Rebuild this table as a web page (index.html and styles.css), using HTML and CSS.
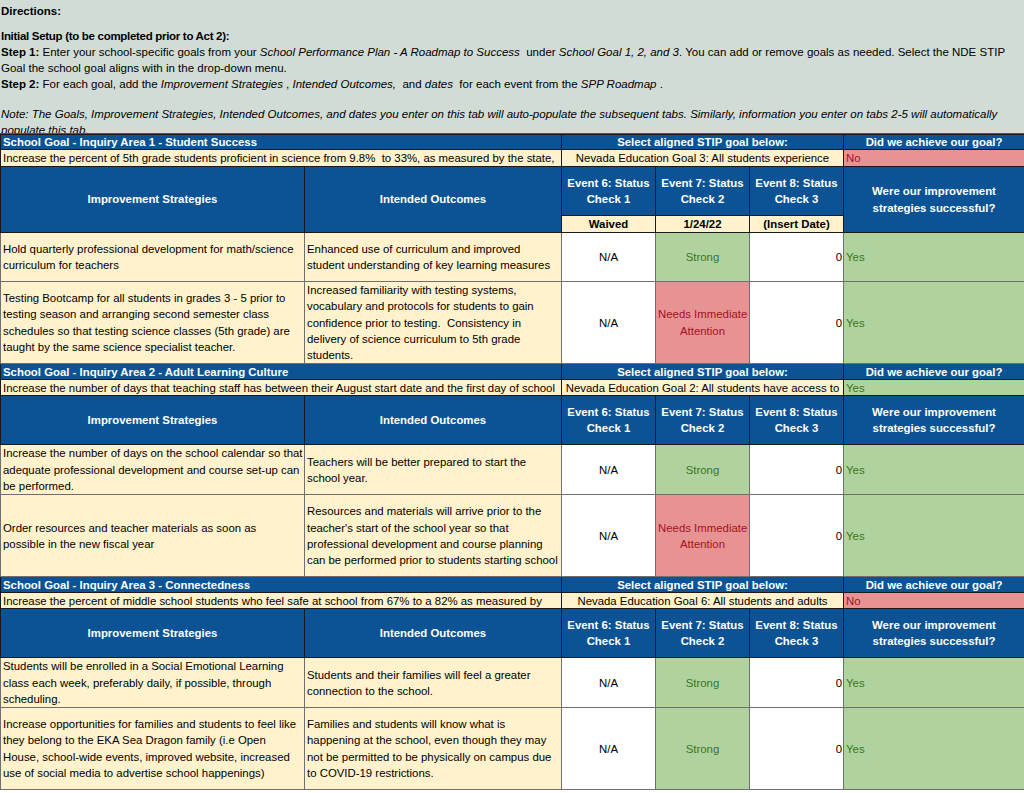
FILE: index.html
```html
<!DOCTYPE html>
<html lang="en">
<head>
<meta charset="utf-8">
<title>STIP Goals</title>
<link rel="stylesheet" href="styles.css">
</head>
<body>
<div class="directions">
  <div class="line"><b>Directions:</b></div>
  <div class="line gap1"><b class="tight">Initial Setup (to be completed prior to Act 2):</b></div>
  <div class="line"><b>Step 1:</b> Enter your school-specific goals from your <i>School Performance Plan - A Roadmap to Success</i>&nbsp; under <i>School Goal 1, 2, and 3</i>. You can add or remove goals as needed. Select the NDE STIP</div>
  <div class="line">Goal the school goal aligns with in the drop-down menu.</div>
  <div class="line"><b>Step 2:</b> For each goal, add the <i>Improvement Strategies</i> , <i>Intended Outcomes,</i>&nbsp; and <i>dates</i>&nbsp; for each event from the <i>SPP Roadmap</i> .</div>
  <div class="line gap2"><i>Note: The Goals, Improvement Strategies, Intended Outcomes, and dates you enter on this tab will auto-populate the subsequent tabs. Similarly, information you enter on tabs 2-5 will automatically</i></div>
  <div class="line"><i>populate this tab.</i></div>
</div>
<table class="sheet">
  <colgroup>
    <col class="c1"><col class="c2"><col class="c3"><col class="c4"><col class="c5"><col class="c6">
  </colgroup>
  <tbody>
    <tr class="gtitle h15">
      <td colspan="2" class="left">School Goal - Inquiry Area 1 - Student Success</td>
      <td colspan="3">Select aligned STIP goal below:</td>
      <td>Did we achieve our goal?</td>
    </tr>
    <tr class="gtext h17">
      <td colspan="2">Increase the percent of 5th grade students proficient in science from 9.8%&nbsp; to 33%, as measured by the state,</td>
      <td colspan="3" class="center">Nevada Education Goal 3: All students experience</td>
      <td class="ans-no">No</td>
    </tr>
    <tr class="head h49">
      <th rowspan="2">Improvement Strategies</th>
      <th rowspan="2">Intended Outcomes</th>
      <th>Event 6: Status<br>Check 1</th>
      <th>Event 7: Status<br>Check 2</th>
      <th>Event 8: Status<br>Check 3</th>
      <th rowspan="2">Were our improvement<br>strategies successful?</th>
    </tr>
    <tr class="dates h17">
      <td>Waived</td><td>1/24/22</td><td>(Insert Date)</td>
    </tr>
    <tr class="data h49">
      <td class="txt">Hold quarterly professional development for math/science<br>curriculum for teachers</td>
      <td class="txt">Enhanced use of curriculum and improved<br>student understanding of key learning measures</td>
      <td class="na">N/A</td>
      <td class="strong">Strong</td>
      <td class="num">0</td>
      <td class="yes">Yes</td>
    </tr>
    <tr class="data h82">
      <td class="txt">Testing Bootcamp for all students in grades 3 - 5 prior to<br>testing season and arranging second semester class<br>schedules so that testing science classes (5th grade) are<br>taught by the same science specialist teacher.</td>
      <td class="txt">Increased familiarity with testing systems,<br>vocabulary and protocols for students to gain<br>confidence prior to testing.&nbsp; Consistency in<br>delivery of science curriculum to 5th grade<br>students.</td>
      <td class="na">N/A</td>
      <td class="needs">Needs Immediate<br>Attention</td>
      <td class="num">0</td>
      <td class="yes">Yes</td>
    </tr>

    <tr class="gtitle h16">
      <td colspan="2" class="left">School Goal - Inquiry Area 2 - Adult Learning Culture</td>
      <td colspan="3">Select aligned STIP goal below:</td>
      <td>Did we achieve our goal?</td>
    </tr>
    <tr class="gtext h16">
      <td colspan="2">Increase the number of days that teaching staff has between their August start date and the first day of school</td>
      <td colspan="3" class="center">Nevada Education Goal 2: All students have access to</td>
      <td class="ans-yes">Yes</td>
    </tr>
    <tr class="head h49">
      <th>Improvement Strategies</th>
      <th>Intended Outcomes</th>
      <th>Event 6: Status<br>Check 1</th>
      <th>Event 7: Status<br>Check 2</th>
      <th>Event 8: Status<br>Check 3</th>
      <th>Were our improvement<br>strategies successful?</th>
    </tr>
    <tr class="data h49">
      <td class="txt">Increase the number of days on the school calendar so that<br>adequate professional development and course set-up can<br>be performed.</td>
      <td class="txt">Teachers will be better prepared to start the<br>school year.</td>
      <td class="na">N/A</td>
      <td class="strong">Strong</td>
      <td class="num">0</td>
      <td class="yes">Yes</td>
    </tr>
    <tr class="data h82">
      <td class="txt">Order resources and teacher materials as soon as<br>possible in the new fiscal year</td>
      <td class="txt">Resources and materials will arrive prior to the<br>teacher's start of the school year so that<br>professional development and course planning<br>can be performed prior to students starting school</td>
      <td class="na">N/A</td>
      <td class="needs">Needs Immediate<br>Attention</td>
      <td class="num">0</td>
      <td class="yes">Yes</td>
    </tr>

    <tr class="gtitle h16">
      <td colspan="2" class="left">School Goal - Inquiry Area 3 - Connectedness</td>
      <td colspan="3">Select aligned STIP goal below:</td>
      <td>Did we achieve our goal?</td>
    </tr>
    <tr class="gtext h16">
      <td colspan="2">Increase the percent of middle school students who feel safe at school from 67% to a 82% as measured by</td>
      <td colspan="3" class="center">Nevada Education Goal 6: All students and adults</td>
      <td class="ans-no">No</td>
    </tr>
    <tr class="head h49">
      <th>Improvement Strategies</th>
      <th>Intended Outcomes</th>
      <th>Event 6: Status<br>Check 1</th>
      <th>Event 7: Status<br>Check 2</th>
      <th>Event 8: Status<br>Check 3</th>
      <th>Were our improvement<br>strategies successful?</th>
    </tr>
    <tr class="data h49">
      <td class="txt">Students will be enrolled in a Social Emotional Learning<br>class each week, preferably daily, if possible, through<br>scheduling.</td>
      <td class="txt">Students and their families will feel a greater<br>connection to the school.</td>
      <td class="na">N/A</td>
      <td class="strong">Strong</td>
      <td class="num">0</td>
      <td class="yes">Yes</td>
    </tr>
    <tr class="data h82">
      <td class="txt">Increase opportunities for families and students to feel like<br>they belong to the EKA Sea Dragon family (i.e Open<br>House, school-wide events, improved website, increased<br>use of social media to advertise school happenings)</td>
      <td class="txt">Families and students will know what is<br>happening at the school, even though they may<br>not be permitted to be physically on campus due<br>to COVID-19 restrictions.</td>
      <td class="na">N/A</td>
      <td class="strong">Strong</td>
      <td class="num">0</td>
      <td class="yes">Yes</td>
    </tr>
  </tbody>
</table>
</body>
</html>
```

FILE: styles.css
```css
html, body {
  margin: 0;
  padding: 0;
  background: #ffffff;
}

body {
  width: 1024px;
  height: 793px;
  overflow: hidden;
  font-family: "Liberation Sans", Arial, sans-serif;
  font-size: 12px;
  color: #000;
}

.directions {
  box-sizing: border-box;
  height: 134px;
  overflow: hidden;
  background: #d2dcd7;
  border-bottom: 1px solid #2e6b45;
  padding: 3px 0 0 1px;
  font-size: 11.5px;
  line-height: 16px;
}

.directions .line {
  white-space: nowrap;
}

.directions .tight {
  letter-spacing: -0.3px;
}

.directions .gap1 { margin-top: 9px; }
.directions .gap2 { margin-top: 14px; }

.sheet {
  width: 1024px;
  table-layout: fixed;
  border-collapse: collapse;
  font-size: 11.4px;
  line-height: 16.3px;
}

.c1 { width: 304px; }
.c2 { width: 257px; }
.c3 { width: 94px; }
.c4 { width: 94px; }
.c5 { width: 94px; }
.c6 { width: 181px; }

.sheet td, .sheet th {
  padding: 0 2px;
  border: 1px solid #6f6f6f;
  overflow: hidden;
  white-space: nowrap;
  vertical-align: middle;
}

.h15 { height: 15px; }
.h16 { height: 16px; }
.h17 { height: 17px; }
.h49 { height: 49px; }
.h82 { height: 82px; }

.gtitle td {
  background: #0b5394;
  color: #fff;
  font-weight: bold;
  text-align: center;
  border-color: #1a1a1a;
  line-height: 14px;
}

.gtitle td.left { text-align: left; }

.gtext td {
  background: #fff2cc;
  border-color: #1a1a1a;
  line-height: 14px;
}

.gtext td.center { text-align: center; }

.gtext td.ans-no {
  background: #e89393;
  color: #a3111e;
}

.gtext td.ans-yes {
  background: #b0d29f;
  color: #38761d;
}

.head th {
  background: #0b5394;
  color: #fff;
  font-weight: bold;
  text-align: center;
  border-color: #1a1a1a;
}

.dates td {
  background: #fff2cc;
  font-weight: bold;
  text-align: center;
  border-color: #1a1a1a;
  line-height: 15px;
}

.data td.txt {
  background: #fff2cc;
  text-align: left;
}

.data td.na {
  background: #ffffff;
  text-align: center;
  border-left-color: #1a1a1a;
}

.data td.strong {
  background: #b0d29f;
  color: #38761d;
  text-align: center;
}

.data td.needs {
  background: #e89393;
  color: #a3111e;
  text-align: center;
}

.data td.num {
  background: #ffffff;
  text-align: right;
  padding-right: 1px;
}

.data td.yes {
  background: #b0d29f;
  color: #38761d;
  text-align: left;
}
```
